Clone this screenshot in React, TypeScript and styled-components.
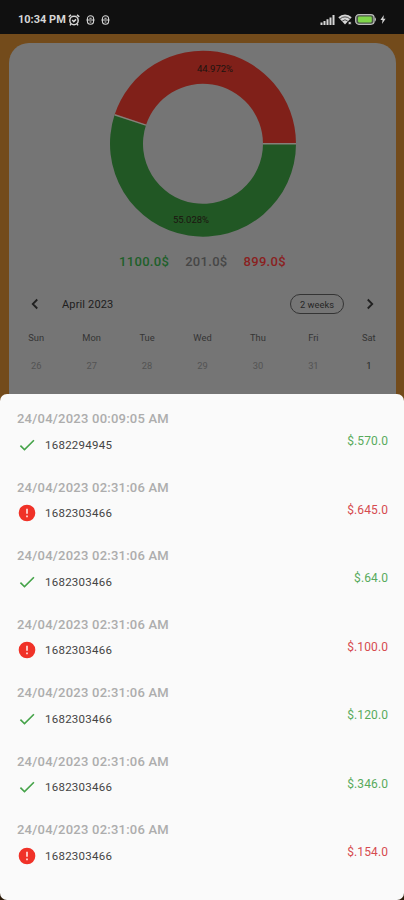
import React from 'react';
import styled, { createGlobalStyle } from 'styled-components';

const GREEN = '#215724';
const RED = '#802019';

const GlobalStyle = createGlobalStyle`
  * { box-sizing: border-box; }
  body { margin: 0; background: #734b1b; }
`;

const Screen = styled.div`
  position: relative;
  width: 404px;
  height: 900px;
  overflow: hidden;
  display: flex;
  flex-direction: column;
  background: #734b1b;
  font-family: Roboto, "Liberation Sans", sans-serif;
`;

const StatusBar = styled.header`
  height: 34px;
  flex: none;
  display: flex;
  align-items: center;
  justify-content: space-between;
  padding: 5px 18px 0;
  background: #101010;
  color: #d6d6d6;
`;

const StatusGroup = styled.div<{ $gap: number }>`
  display: flex;
  align-items: center;
  gap: ${(p) => p.$gap}px;
  svg { display: block; }
`;

const Clock = styled.span`
  font-size: 11px;
  line-height: 14px;
  font-weight: 700;
  letter-spacing: 0;
  width: 50px;
  white-space: nowrap;
`;

const Card = styled.main`
  flex: 1;
  margin: 9px 8px 0 9px;
  padding-top: 7px;
  border-radius: 20px 20px 0 0;
  background: #757575;
  display: flex;
  flex-direction: column;
  align-items: center;
`;

const Chart = styled.svg`
  display: block;
  flex: none;
  width: 188px;
  height: 188px;
  text { font-size: 9.5px; fill: #1c1410; text-anchor: middle; }
`;

const Totals = styled.div`
  display: flex;
  gap: 16px;
  margin-top: 14px;
  height: 18px;
  align-items: center;
`;

const Total = styled.span<{ $color: string }>`
  font-size: 13px;
  font-weight: 500;
  letter-spacing: 0.3px;
  color: ${(p) => p.$color};
`;

const CalendarHeader = styled.div`
  width: 100%;
  height: 22px;
  margin-top: 23px;
  padding: 0 17px 0 17px;
  display: flex;
  align-items: center;
  color: #202020;
  svg { display: block; }
`;

const Month = styled.span`
  flex: 1;
  margin-left: 18px;
  font-size: 11px;
  letter-spacing: 0.15px;
`;

const FormatButton = styled.button`
  width: 54px;
  height: 20px;
  padding: 0;
  margin-right: 17px;
  border: 1px solid #343434;
  border-radius: 10px;
  background: transparent;
  color: #262626;
  font: 9.3px Roboto, sans-serif;
`;

const Week = styled.div<{ $top: number }>`
  width: 388px;
  display: grid;
  grid-template-columns: repeat(7, 1fr);
  margin-top: ${(p) => p.$top}px;
  line-height: 14px;
  text-align: center;
`;

const Weekday = styled.span`
  font-size: 9.3px;
  color: #343434;
`;

const Day = styled.span<{ $outside: boolean }>`
  font-size: 9.3px;
  color: ${(p) => (p.$outside ? '#535353' : '#252525')};
`;

const Sheet = styled.section`
  position: absolute;
  inset: 394px 0 0;
  padding-top: 16px;
  border-radius: 7px;
  background: #fafafa;
`;

const SheetCorners = styled.div`
  position: absolute;
  inset: auto 0 0;
  height: 8px;
  background: #2b1a08;
`;

const Entry = styled.article`
  height: 68.5px;
  padding: 0 16px 0 17px;
  display: grid;
  grid-template-columns: 20px 1fr auto;
  grid-template-rows: 17px 35px;
  column-gap: 8px;
  align-items: center;
  svg { display: block; }
`;

const Stamp = styled.time`
  grid-column: 1 / -1;
  font-size: 13px;
  line-height: 17px;
  font-weight: 500;
  letter-spacing: 0.23px;
  color: #adadad;
`;

const Reference = styled.span`
  font-size: 11.5px;
  letter-spacing: 0.25px;
  color: #444;
`;

const Amount = styled.span<{ $ok: boolean }>`
  font-size: 12px;
  letter-spacing: 0.1px;
  margin-bottom: 7px;
  color: ${(p) => (p.$ok ? '#58aa5c' : '#d64b4f')};
`;

const entries = [
  { stamp: '24/04/2023 00:09:05 AM', id: '1682294945', amount: '$.570.0', ok: true },
  { stamp: '24/04/2023 02:31:06 AM', id: '1682303466', amount: '$.645.0', ok: false },
  { stamp: '24/04/2023 02:31:06 AM', id: '1682303466', amount: '$.64.0', ok: true },
  { stamp: '24/04/2023 02:31:06 AM', id: '1682303466', amount: '$.100.0', ok: false },
  { stamp: '24/04/2023 02:31:06 AM', id: '1682303466', amount: '$.120.0', ok: true },
  { stamp: '24/04/2023 02:31:06 AM', id: '1682303466', amount: '$.346.0', ok: true },
  { stamp: '24/04/2023 02:31:06 AM', id: '1682303466', amount: '$.154.0', ok: false },
];

const weekdays = ['Sun', 'Mon', 'Tue', 'Wed', 'Thu', 'Fri', 'Sat'];
const days = [26, 27, 28, 29, 30, 31, 1];

const AlarmIcon = () => (
  <svg width="12" height="12" viewBox="0 0 12 12" fill="none" stroke="currentColor" strokeWidth="1.5">
    <circle cx="6" cy="6.5" r="4.2" />
    <path d="M.7 2.8 3 .9M11.3 2.8 9 .9M4.2 6l1.6 1.6L8 5.4M3 10l-1 1.4M9 10l1 1.4" />
  </svg>
);

const AppIcon = () => (
  <svg width="9" height="10" viewBox="0 0 9 10" fill="none" stroke="currentColor" strokeWidth="1.1">
    <path d="M1.4 3.8a3.1 3 0 0 1 6.2 0v2.4a3.1 3 0 0 1-6.2 0zM.4 5h8.2M3.4 3.2h2.2M3.6 7h1.8" />
  </svg>
);

const SignalIcon = () => (
  <svg width="15" height="10" viewBox="0 0 15 10" fill="currentColor">
    <path d="M.5 7.5h2V10h-2zM3.5 6h2v4h-2zM6.5 4.3h2V10h-2zM9.5 2.4h2V10h-2zM12.5 0h2v10h-2z" />
  </svg>
);

const WifiIcon = () => (
  <svg width="14" height="11" viewBox="0 0 14 11">
    <path d="M.3 3.2a9.8 9.8 0 0 1 13.4 0L7 10.4z" fill="currentColor" />
    <path d="M2.2 4.8a7 7 0 0 1 9.6 0M4.3 7a4 4 0 0 1 5.4 0" fill="none" stroke="#101010" strokeWidth=".7" />
    <path d="M10.2 7.6h3v3h-3z" fill="currentColor" stroke="#101010" strokeWidth=".8" />
  </svg>
);

const BatteryIcon = () => (
  <svg width="22" height="11" viewBox="0 0 22 11">
    <rect x=".7" y=".7" width="18.4" height="9.6" rx="3.2" fill="#4b5648" stroke="#bcbcbc" strokeWidth="1.3" />
    <rect x="3" y="2.6" width="13.8" height="5.8" rx="1.3" fill="#7fd64a" />
    <path d="M20 3.3q2 2.2 0 4.4z" fill="#bcbcbc" />
  </svg>
);

const BoltIcon = () => (
  <svg width="6" height="9" viewBox="0 0 6 9" fill="currentColor">
    <path d="M3.8 0 .4 4.9h2.1L2 9l3.6-5.2H3.4z" />
  </svg>
);

const CheckIcon = () => (
  <svg width="20" height="20" viewBox="0 0 24 24" fill="#45a349">
    <path d="M9 16.2 4.8 12l-1.4 1.4L9 19 21 7l-1.4-1.4z" />
  </svg>
);

const ErrorIcon = () => (
  <svg width="20" height="20" viewBox="0 0 24 24">
    <circle cx="12" cy="12" r="10" fill="#f03228" />
    <path d="M11 7h2v6h-2zM11 15h2v2h-2z" fill="#ffe3df" />
  </svg>
);

const Chevron = ({ next = false }: { next?: boolean }) => (
  <svg width="18" height="18" viewBox="0 0 24 24" fill="none" stroke="currentColor" strokeWidth="2.4">
    <path d={next ? 'm9 6 6 6-6 6' : 'm15 6-6 6 6 6'} />
  </svg>
);

const Donut = () => (
  <Chart viewBox="-94 -93.7 188 188">
    <path d="M93 0A93 93 0 0 0-88.4-28.9L-57-18.6A60 60 0 0 1 60 0Z" fill={RED} />
    <path d="M93 0A93 93 0 1 1-88.4-28.9L-57-18.6A60 60 0 1 0 60 0Z" fill={GREEN} />
    <path d="M60 0H93M-57-18.6-88.4-28.9" stroke="#858079" strokeWidth="1.5" />
    <text x="12" y="-72">44.972%</text>
    <text x="-12" y="79">55.028%</text>
  </Chart>
);

export default function App() {
  return (
    <>
      <GlobalStyle />
      <Screen>
        <StatusBar>
          <StatusGroup $gap={6}>
            <StatusGroup $gap={0}>
              <Clock>10:34 PM</Clock>
              <AlarmIcon />
            </StatusGroup>
            <AppIcon />
            <AppIcon />
          </StatusGroup>
          <StatusGroup $gap={3}>
            <SignalIcon />
            <WifiIcon />
            <BatteryIcon />
            <BoltIcon />
          </StatusGroup>
        </StatusBar>
        <Card>
          <Donut />
          <Totals>
            <Total $color="#20602a">1100.0$</Total>
            <Total $color="#464646">201.0$</Total>
            <Total $color="#8a211f">899.0$</Total>
          </Totals>
          <CalendarHeader>
            <Chevron />
            <Month>April 2023</Month>
            <FormatButton>2 weeks</FormatButton>
            <Chevron next />
          </CalendarHeader>
          <Week $top={16}>
            {weekdays.map((d) => <Weekday key={d}>{d}</Weekday>)}
          </Week>
          <Week $top={14}>
            {days.map((d) => <Day key={d} $outside={d > 1}>{d}</Day>)}
          </Week>
        </Card>
        <SheetCorners />
        <Sheet>
          {entries.map((e, i) => (
            <Entry key={i}>
              <Stamp>{e.stamp}</Stamp>
              {e.ok ? <CheckIcon /> : <ErrorIcon />}
              <Reference>{e.id}</Reference>
              <Amount $ok={e.ok}>{e.amount}</Amount>
            </Entry>
          ))}
        </Sheet>
      </Screen>
    </>
  );
}
